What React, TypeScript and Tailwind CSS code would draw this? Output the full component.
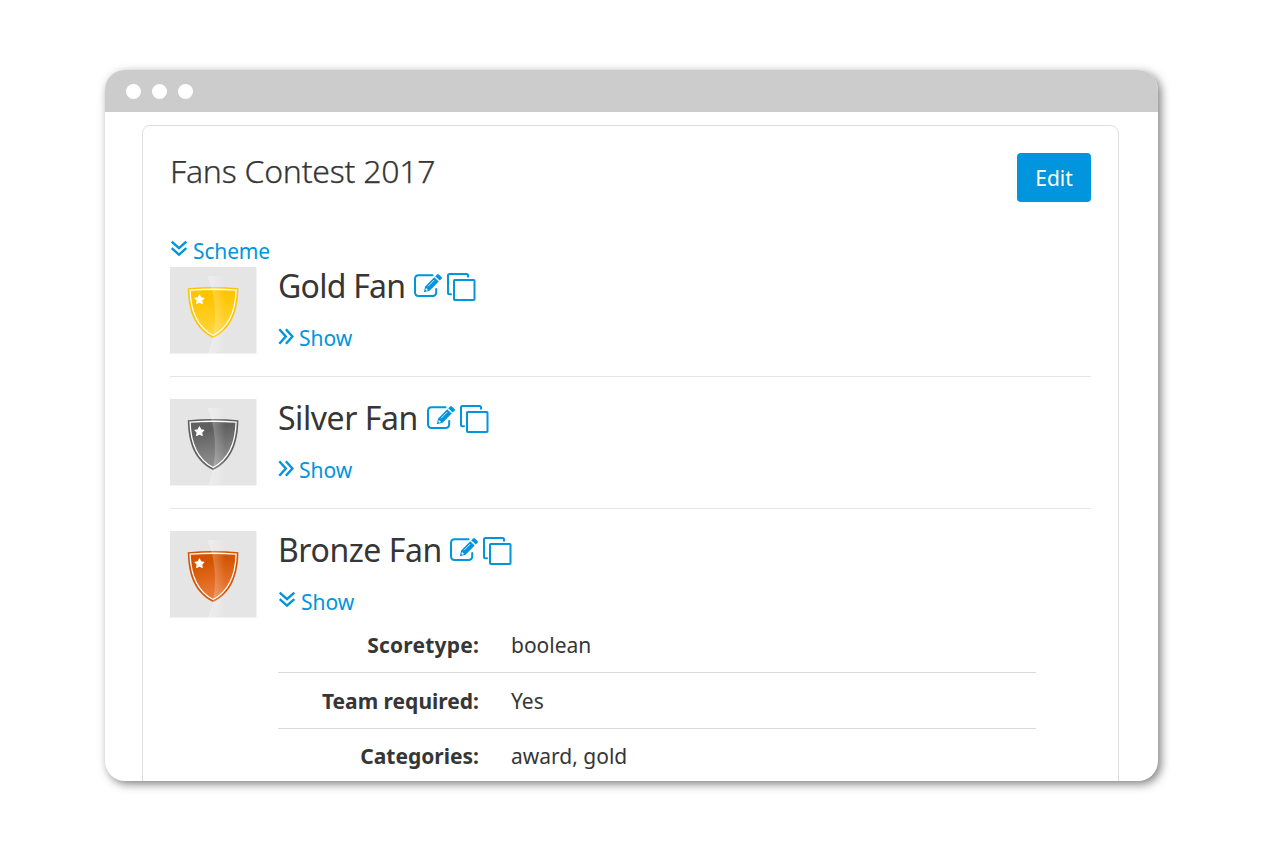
type Tone = { id: string; from: string; to: string };

const GOLD: Tone = { id: "gold", from: "#ffc400", to: "#ffd740" };
const SILVER: Tone = { id: "silver", from: "#5e5f5e", to: "#949494" };
const BRONZE: Tone = { id: "bronze", from: "#d35400", to: "#ee8040" };

const OUTER = "M17.9 21.3C35 19.8 52 19.8 68.8 21.3C68.4 44 62 62.200 43.300 71.300C24.500 62.200 18.300 44 17.900 21.300Z";
const INNER = "M20.200 23.300C36 22 51 22 66.500 23.300C65.900 43.700 60 60.200 43.300 68.900C26.700 60.200 20.800 43.700 20.200 23.300Z";
const STREAK = "M37.300 9H55.700V87H38.300C49.500 60 46 26 37.300 9Z";

function Shield({ tone }: { tone: Tone }) {
  const fill = `fill-${tone.id}`;
  const shine = `shine-${tone.id}`;
  return (
    <svg className="block h-[86.6px] w-[86.5px] shrink-0" viewBox="0 0 87 87">
      <defs>
        <linearGradient id={fill} x1="0.35" y1="0.1" x2="0.55" y2="1">
          <stop offset="0.1" stopColor={tone.from} />
          <stop offset="1" stopColor={tone.to} />
        </linearGradient>
        <linearGradient id={shine} x1="0" y1="0" x2="1" y2="0">
          <stop offset="0.2" stopColor="#fff" stopOpacity="0.3" />
          <stop offset="1" stopColor="#fff" stopOpacity="0" />
        </linearGradient>
      </defs>
      <rect width="87" height="87" fill="#e5e5e5" />
      <path d={OUTER} fill={tone.from} />
      <path d={INNER} fill={`url(#${fill})`} stroke="#fff" strokeWidth="1.3" />
      <path d={STREAK} fill={`url(#${shine})`} />
      <path
        d="M29.600 28L31 30.800L34.100 31.300L31.900 33.500L32.400 36.600L29.600 35.200L26.800 36.600L27.300 33.500L25.100 31.300L28.200 30.800Z"
        fill="#fff"
        stroke="#fff"
        strokeWidth="1.1"
        strokeLinejoin="round"
      />
    </svg>
  );
}

function EditIcon() {
  return (
    <svg className="mt-[4px] block h-[30px] w-[30px] shrink-0" viewBox="0 0 30 30" fill="none" stroke="#0095dd">
      <path d="M18.500 3.200H4.700Q1 3.200 1 6.900V20.300Q1 24 4.700 24H18.500Q22.200 24 22.200 20.300V17" strokeWidth="2" strokeLinecap="round" />
      <path d="M9.800 20.200L11.200 14.400L20.200 5.300L24.700 9.600L15.600 18.700Z" fill="#0095dd" stroke="none" />
      <path d="M21.200 4.300L23.200 2.400Q24 1.700 24.800 2.400L27.600 5.100Q28.400 5.900 27.600 6.700L25.700 8.600Z" fill="#0095dd" stroke="none" />
      <path d="M14 14.300L20.200 8" stroke="#fff" strokeWidth="0.8" />
      <path d="M12 16L14.100 18.100L12.300 18.700L11.300 17.700Z" fill="#fff" stroke="none" />
    </svg>
  );
}

function CopyIcon() {
  return (
    <svg className="block h-[30px] w-[30px] shrink-0" viewBox="0 0 30 30" fill="none" stroke="#0095dd" strokeWidth="2" strokeLinejoin="round">
      <rect x="7" y="8" width="20.500" height="20" rx="0.8" />
      <path d="M4.800 22.200H2.500Q1 22.200 1 20.700V3.500Q1 2 2.500 2H19.500Q21 2 21 3.500V5.600" />
    </svg>
  );
}

function ChevronsDown() {
  return (
    <svg className="block h-[18px] w-[18px] shrink-0" viewBox="0 0 18 18" fill="none" stroke="#0095dd" strokeWidth="2.4">
      <path d="M1.700 1.700L9 8.200L16.300 1.700M1.700 8.200L9 14.700L16.300 8.200" />
    </svg>
  );
}

function ChevronsRight() {
  return (
    <svg className="block h-[18px] w-[18px] shrink-0" viewBox="0 0 18 18" fill="none" stroke="#0095dd" strokeWidth="2.4">
      <path d="M2.300 2.200L8.800 9.500L2.300 16.800M8.900 2.200L15.400 9.500L8.900 16.800" />
    </svg>
  );
}

type AwardProps = {
  name: string;
  tone: Tone;
  nameClass: string;
  open?: boolean;
  last?: boolean;
};

const DETAILS = [
  { label: "Scoretype:", value: "boolean", labelClass: "tracking-[0.2px]" },
  { label: "Team required:", value: "Yes", labelClass: "" },
  { label: "Categories:", value: "award, gold", labelClass: "" },
];

function Award({ name, tone, nameClass, open, last }: AwardProps) {
  return (
    <article className={last ? "flex" : "mb-[22px] flex h-[110px] border-b border-[#e6e6e6]"}>
      <Shield tone={tone} />
      <div className="ml-[21.5px] w-[758px]">
        <div className="flex h-[37px] items-center">
          <h2 className={`shrink-0 whitespace-nowrap text-[32px] leading-[37px] ${nameClass}`}>{name}</h2>
          <EditIcon />
          <div className="ml-[3px] mt-[3px]"><CopyIcon /></div>
        </div>
        <a className={open ? "mt-[21px] flex h-[26px] gap-[5px] text-[#0095dd]" : "mt-[21px] flex h-[26px] gap-[4px] text-[#0095dd]"}>
          <span className={open ? "mt-[2px]" : "mt-[2px] -ml-px"}>{open ? <ChevronsDown /> : <ChevronsRight />}</span>
          <span className="leading-[26px]">Show</span>
        </a>
        {open && (
          <dl className="mt-[2px]">
            {DETAILS.map((d, i) => (
              <div key={d.label} className={i === DETAILS.length - 1 ? "flex h-[55px] items-center" : "flex h-14 items-center border-b border-[#d9d9d9] pt-[2px]"}>
                <dt className={`w-[201px] text-right font-bold ${d.labelClass}`}>{d.label}</dt>
                <dd className="ml-[32px]">{d.value}</dd>
              </div>
            ))}
          </dl>
        )}
      </div>
    </article>
  );
}

export default function App() {
  return (
    <div className="h-[852px] w-[1263px] overflow-hidden bg-white pl-[105px] pt-[70.4px] font-['Noto_Sans',sans-serif] text-[21px] text-[#363636]">
      <main className="h-[710.6px] w-[1053px] overflow-hidden rounded-[20px] bg-white shadow-[3px_3px_10px_rgba(0,0,0,0.5)]">
        <div className="flex h-[41.3px] items-center gap-[11px] bg-[#cccccc] pl-[21px]">
          <span className="h-[15px] w-[15px] rounded-full bg-white" />
          <span className="h-[15px] w-[15px] rounded-full bg-white" />
          <span className="h-[15px] w-[15px] rounded-full bg-white" />
        </div>
        <section className="ml-[37px] mt-[13.3px] h-[700px] w-[977px] rounded-[8px] border border-[#dedede] px-[27px] pt-[27px]">
          <header className="flex h-[49px] justify-between">
            <h1 className="whitespace-nowrap text-[32px] font-light leading-[36px] tracking-[-0.25px] [-webkit-text-stroke:0.25px_#363636]">Fans Contest 2017</h1>
            <button className="h-[49px] w-[74px] rounded-[4px] bg-[#0095dd] pt-[2px] text-white">Edit</button>
          </header>
          <a className="mt-[33px] flex h-8 gap-[5px] text-[#0095dd]">
            <span className="mt-[5px]"><ChevronsDown /></span>
            <span className="leading-8 tracking-[-0.15px]">Scheme</span>
          </a>
          <Award name="Gold Fan" tone={GOLD} nameClass="w-[135.5px] tracking-[-0.75px]" />
          <Award name="Silver Fan" tone={SILVER} nameClass="w-[148.5px] tracking-[-0.45px]" />
          <Award name="Bronze Fan" tone={BRONZE} nameClass="w-[172px] tracking-[-0.45px]" open last />
        </section>
      </main>
    </div>
  );
}
